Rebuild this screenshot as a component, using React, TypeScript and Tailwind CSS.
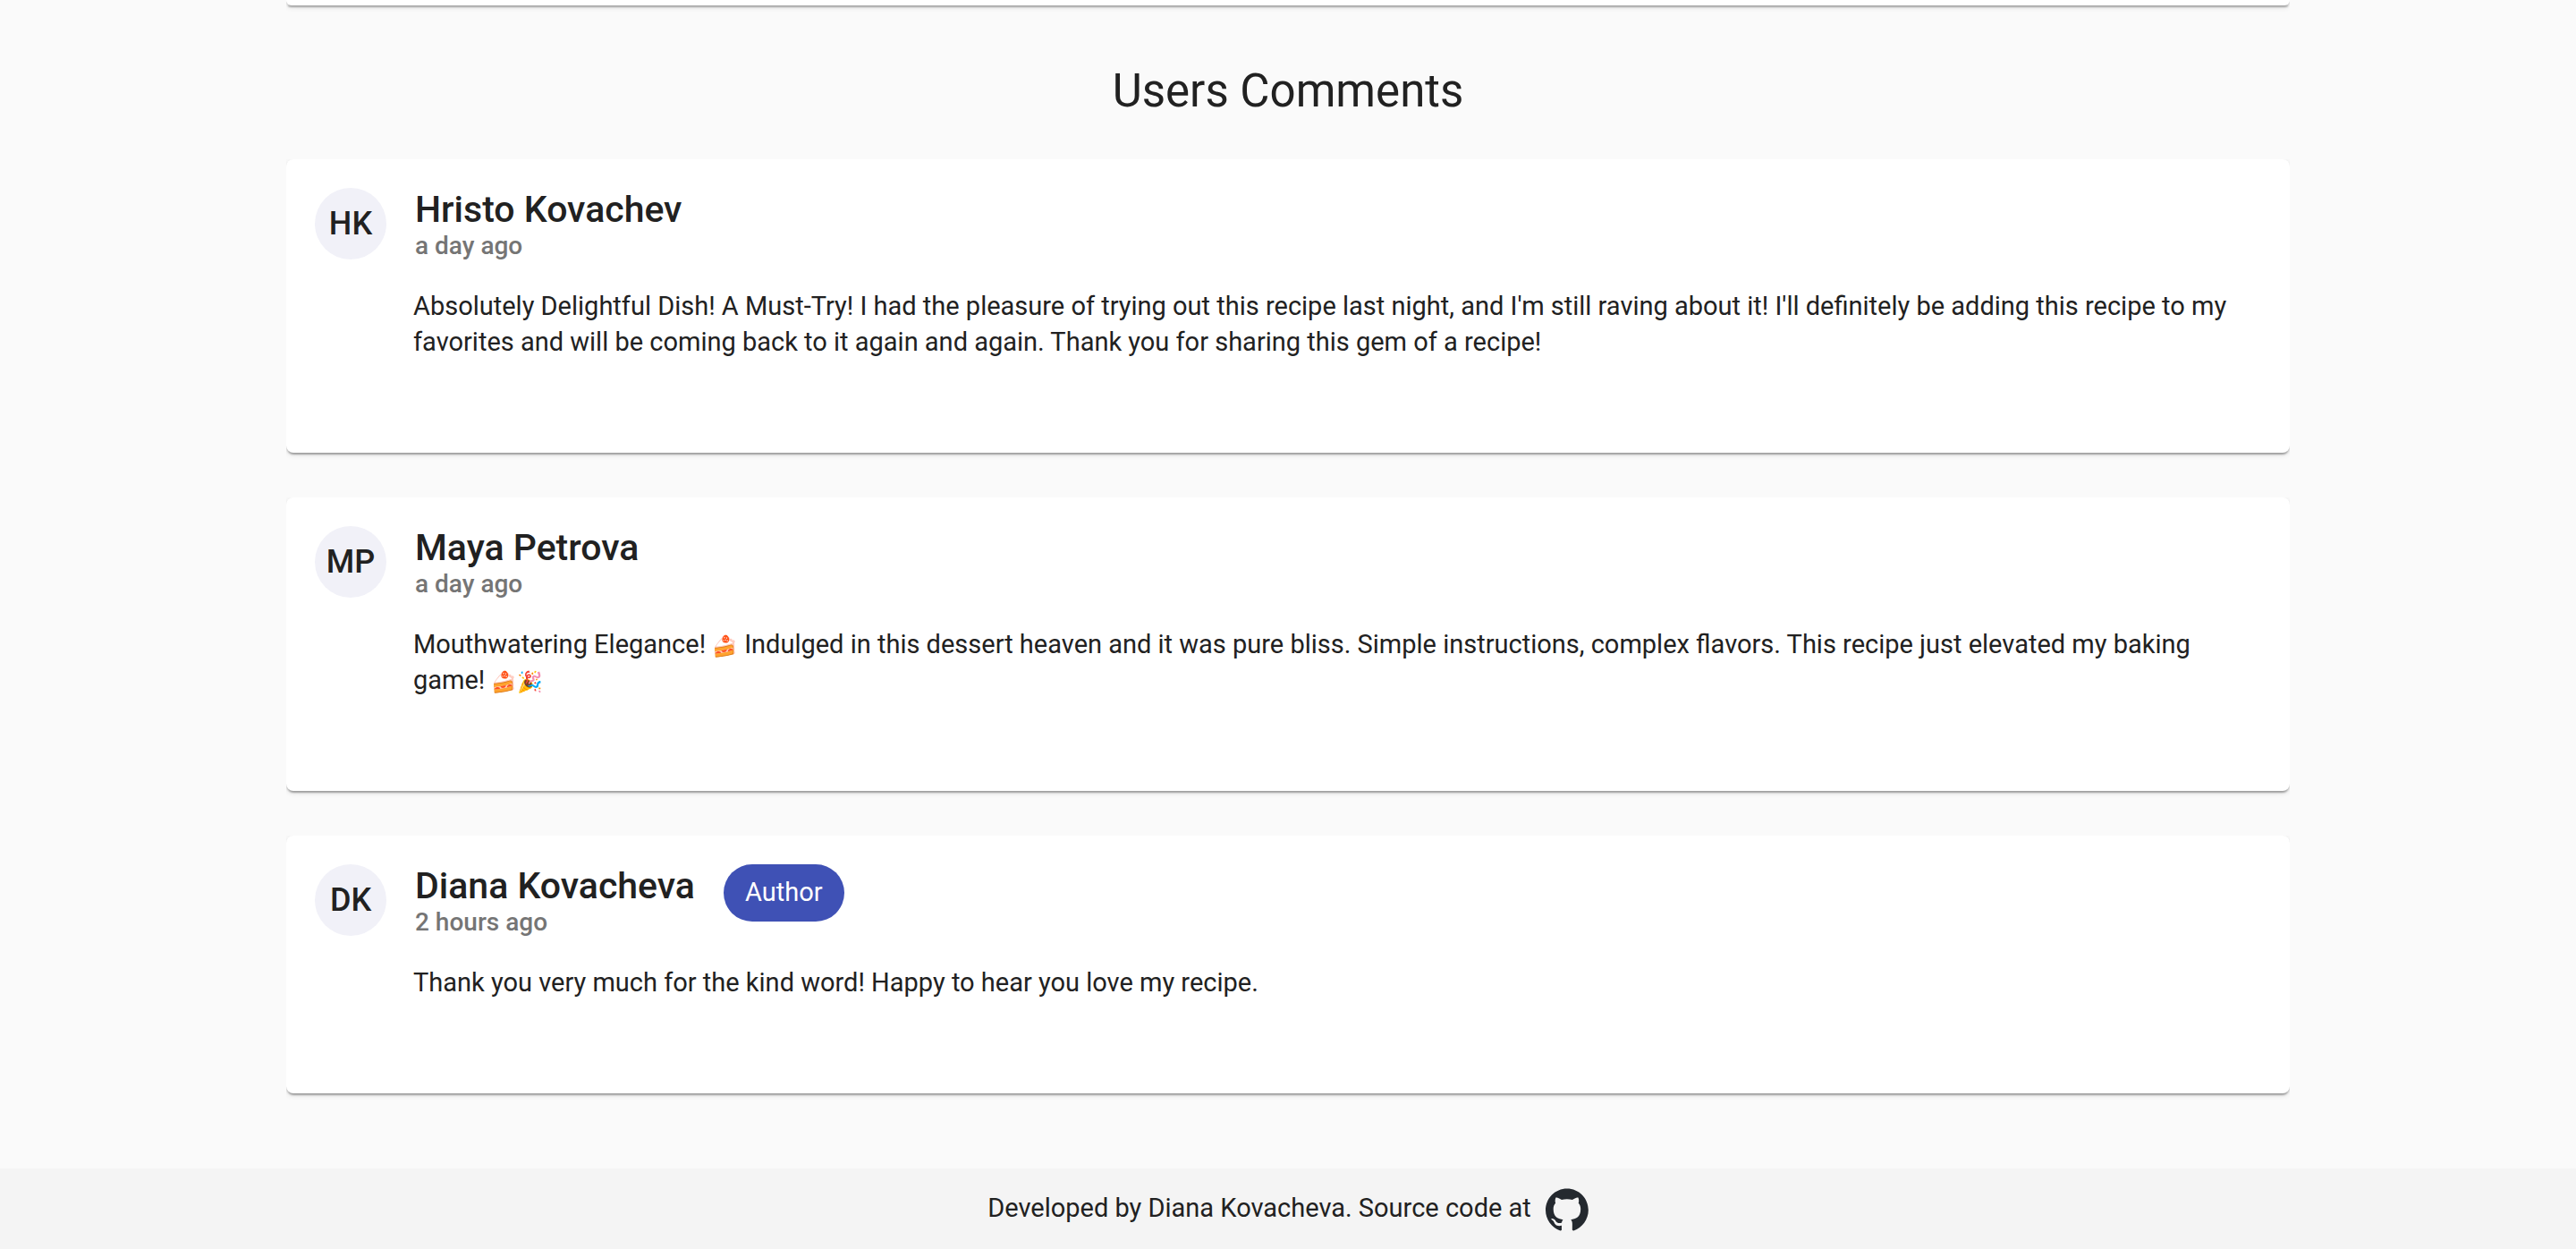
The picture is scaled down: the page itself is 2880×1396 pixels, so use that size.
type Comment = {
  initials: string;
  name: string;
  time: string;
  text: string;
  isAuthor?: boolean;
};

const comments: Comment[] = [
  {
    initials: 'HK',
    name: 'Hristo Kovachev',
    time: 'a day ago',
    text: "Absolutely Delightful Dish! A Must-Try! I had the pleasure of trying out this recipe last night, and I'm still raving about it! I'll definitely be adding this recipe to my favorites and will be coming back to it again and again. Thank you for sharing this gem of a recipe!",
  },
  {
    initials: 'MP',
    name: 'Maya Petrova',
    time: 'a day ago',
    text: 'Mouthwatering Elegance! 🍰 Indulged in this dessert heaven and it was pure bliss. Simple instructions, complex flavors. This recipe just elevated my baking game! 🍰🎉',
  },
  {
    initials: 'DK',
    name: 'Diana Kovacheva',
    time: '2 hours ago',
    text: 'Thank you very much for the kind word! Happy to hear you love my recipe.',
    isAuthor: true,
  },
];

// Material elevation used by every card; only the part below the card is shown.
const elevation =
  'shadow-[0_4px_2px_-2px_rgba(0,0,0,0.2),0_2px_2px_0_rgba(0,0,0,0.14),0_2px_6px_0_rgba(0,0,0,0.12)] [clip-path:inset(0_0_-10px_0)]';

// Emoji glyphs run wider than the letters around them, so they are set a step smaller.
function CommentText({ text }: { text: string }) {
  return text
    .split(/((?:🍰|🎉)+)/u)
    .map((part, i) =>
      i % 2 ? (
        <span key={i} className="text-[23px] leading-none">
          {part}
        </span>
      ) : (
        part
      ),
    );
}

function CommentCard({ comment }: { comment: Comment }) {
  return (
    <article className={`rounded-lg bg-white px-8 pt-8 pb-26 ${elevation}`}>
      <header className="flex items-start">
        <div className="flex size-20 shrink-0 items-center justify-center rounded-full bg-[#f1f1f8] text-4xl font-medium">
          {comment.initials}
        </div>
        <div className="ml-8">
          <h2 className="pt-0.5 text-[41px] leading-[44px] font-medium">{comment.name}</h2>
          <p className="text-[28px] leading-[38px] font-medium text-[#757575]">{comment.time}</p>
        </div>
        {comment.isAuthor && (
          <span className="ml-8 flex h-16 items-center rounded-full bg-[#3f51b5] px-6 text-[29px] text-white">
            Author
          </span>
        )}
      </header>
      <p className="mt-7 pl-[110px] text-[29px] leading-10">
        <CommentText text={comment.text} />
      </p>
    </article>
  );
}

function GitHubMark() {
  return (
    <svg viewBox="0 0 98 96" className="size-12" fill="#24292f" aria-hidden="true">
      <path
        fillRule="evenodd"
        clipRule="evenodd"
        d="M48.854 0C21.839 0 0 22 0 49.217c0 21.756 13.993 40.172 33.405 46.69 2.427.49 3.316-1.059 3.316-2.362 0-1.141-.08-5.052-.08-9.127-13.59 2.934-16.42-5.867-16.42-5.867-2.184-5.704-5.42-7.17-5.42-7.17-4.448-3.015.324-3.015.324-3.015 4.934.326 7.523 5.052 7.523 5.052 4.367 7.496 11.404 5.378 14.235 4.074.404-3.178 1.699-5.378 3.074-6.6-10.839-1.141-22.243-5.378-22.243-24.283 0-5.378 1.94-9.778 5.014-13.2-.485-1.222-2.184-6.275.486-13.038 0 0 4.125-1.304 13.426 5.052a46.97 46.97 0 0 1 12.214-1.63c4.125 0 8.33.571 12.213 1.63 9.302-6.356 13.427-5.052 13.427-5.052 2.67 6.763.97 11.816.485 13.038 3.155 3.422 5.015 7.822 5.015 13.2 0 18.905-11.404 23.06-22.324 24.283 1.78 1.548 3.316 4.481 3.316 9.126 0 6.6-.08 11.897-.08 13.526 0 1.304.89 2.853 3.316 2.364 19.412-6.52 33.405-24.935 33.405-46.691C97.707 22 75.788 0 48.854 0z"
      />
    </svg>
  );
}

export default function App() {
  return (
    <div className="flex min-h-screen flex-col bg-[#fafafa] font-['Roboto','Noto_Color_Emoji',sans-serif] text-[#212121]">
      <main className="mx-auto w-7/9 grow pb-[84px]">
        <div className={`h-1.5 rounded-b-lg bg-white ${elevation}`} />
        <h1 className="pt-16 pb-11 text-center text-[51px] leading-16">Users Comments</h1>
        <section className="flex flex-col gap-[50px]">
          {comments.map((comment) => (
            <CommentCard key={comment.name} comment={comment} />
          ))}
        </section>
      </main>
      <footer className="flex items-center justify-center gap-4 bg-[#f4f4f4] pt-[22px] pb-5 text-[29px]">
        <p className="pb-1 leading-10">Developed by Diana Kovacheva. Source code at</p>
        <a href="https://github.com" aria-label="GitHub repository">
          <GitHubMark />
        </a>
      </footer>
    </div>
  );
}
